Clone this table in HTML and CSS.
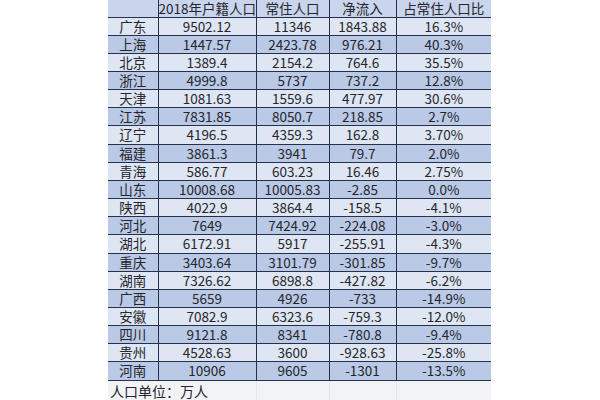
FILE: index.html
```html
<!DOCTYPE html>
<html>
<head>
<meta charset="utf-8">
<link rel="stylesheet" href="styles.css">
</head>
<body>
<table class="sheet">
<colgroup>
<col class="c1"><col class="c2"><col class="c3"><col class="c4"><col class="c5">
</colgroup>
<thead>
<tr class="head"><th></th><th>2018年户籍人口</th><th>常住人口</th><th>净流入</th><th>占常住人口比</th></tr>
</thead>
<tbody>
<tr class="odd"><td>广东</td><td>9502.12</td><td>11346</td><td>1843.88</td><td>16.3%</td></tr>
<tr class="even"><td>上海</td><td>1447.57</td><td>2423.78</td><td>976.21</td><td>40.3%</td></tr>
<tr class="odd"><td>北京</td><td>1389.4</td><td>2154.2</td><td>764.6</td><td>35.5%</td></tr>
<tr class="even"><td>浙江</td><td>4999.8</td><td>5737</td><td>737.2</td><td>12.8%</td></tr>
<tr class="odd"><td>天津</td><td>1081.63</td><td>1559.6</td><td>477.97</td><td>30.6%</td></tr>
<tr class="even"><td>江苏</td><td>7831.85</td><td>8050.7</td><td>218.85</td><td>2.7%</td></tr>
<tr class="odd"><td>辽宁</td><td>4196.5</td><td>4359.3</td><td>162.8</td><td>3.70%</td></tr>
<tr class="even"><td>福建</td><td>3861.3</td><td>3941</td><td>79.7</td><td>2.0%</td></tr>
<tr class="odd"><td>青海</td><td>586.77</td><td>603.23</td><td>16.46</td><td>2.75%</td></tr>
<tr class="even"><td>山东</td><td>10008.68</td><td>10005.83</td><td>-2.85</td><td>0.0%</td></tr>
<tr class="odd"><td>陕西</td><td>4022.9</td><td>3864.4</td><td>-158.5</td><td>-4.1%</td></tr>
<tr class="even"><td>河北</td><td>7649</td><td>7424.92</td><td>-224.08</td><td>-3.0%</td></tr>
<tr class="odd"><td>湖北</td><td>6172.91</td><td>5917</td><td>-255.91</td><td>-4.3%</td></tr>
<tr class="even"><td>重庆</td><td>3403.64</td><td>3101.79</td><td>-301.85</td><td>-9.7%</td></tr>
<tr class="odd"><td>湖南</td><td>7326.62</td><td>6898.8</td><td>-427.82</td><td>-6.2%</td></tr>
<tr class="even"><td>广西</td><td>5659</td><td>4926</td><td>-733</td><td>-14.9%</td></tr>
<tr class="odd"><td>安徽</td><td>7082.9</td><td>6323.6</td><td>-759.3</td><td>-12.0%</td></tr>
<tr class="even"><td>四川</td><td>9121.8</td><td>8341</td><td>-780.8</td><td>-9.4%</td></tr>
<tr class="odd"><td>贵州</td><td>4528.63</td><td>3600</td><td>-928.63</td><td>-25.8%</td></tr>
<tr class="even"><td>河南</td><td>10906</td><td>9605</td><td>-1301</td><td>-13.5%</td></tr>
<tr class="foot"><td colspan="2" class="note">人口单位：万人</td><td></td><td></td><td></td></tr>
</tbody>
</table>
</body>
</html>
```
FILE: styles.css
```css
html, body {
  margin: 0;
  padding: 0;
  background: #ffffff;
}
.sheet {
  margin-left: 108px;
  border-collapse: collapse;
  table-layout: fixed;
  width: 383px;
  font-family: "Noto Sans CJK SC", "Noto Sans", sans-serif;
  font-size: 13.5px;
  color: #25252b;
}
.c1 { width: 50px; }
.c2 { width: 98px; }
.c3 { width: 73px; }
.c4 { width: 67px; }
.c5 { width: 95px; }
.sheet th, .sheet td {
  padding: 0;
  text-align: center;
  line-height: 17.15px;
  white-space: nowrap;
  overflow: visible;
  border: 1px solid #27304a;
}
.sheet th {
  font-weight: normal;
  line-height: 16.5px;
  border-top: none;
  background: #c9d5ec;
}
.sheet tr > :first-child { border-left: none; }
.sheet tr > :last-child { border-right: none; }
.odd td { background: #dfe6f3; }
.even td { background: #b9c9e6; }
.foot td {
  line-height: 20px;
  background: #f1f3f7;
  border: 1px solid #e2e6ee;
  border-top: 1px solid #27304a;
  border-bottom: none;
}
.foot td.note {
  text-align: left;
  padding-left: 2px;
  font-size: 14px;
}
```
